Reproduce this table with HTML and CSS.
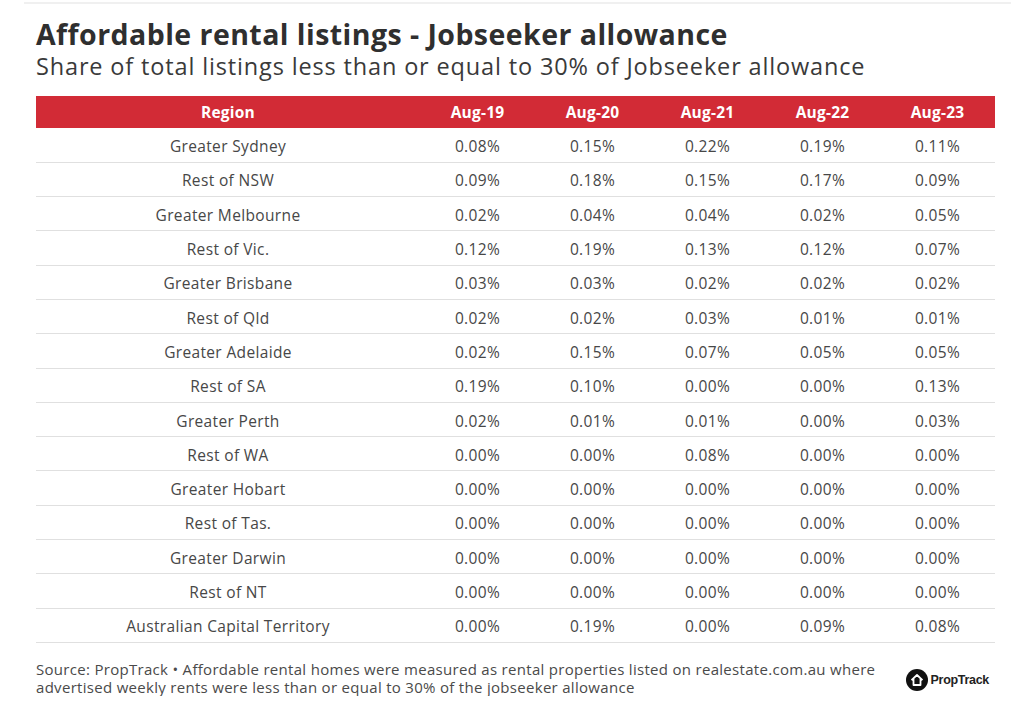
FILE: index.html
```html
<!DOCTYPE html>
<html>
<head>
<meta charset="utf-8">
<link rel="stylesheet" href="styles.css">
</head>
<body>
<div class="topline"></div>
<div class="wrap">
  <h1 class="title">Affordable rental listings - Jobseeker allowance</h1>
  <p class="subtitle">Share of total listings less than or equal to 30% of Jobseeker allowance</p>
  <table class="tbl">
    <thead>
      <tr><th class="reg">Region</th><th>Aug-19</th><th>Aug-20</th><th>Aug-21</th><th>Aug-22</th><th>Aug-23</th></tr>
    </thead>
    <tbody>
      <tr><td>Greater Sydney</td><td>0.08%</td><td>0.15%</td><td>0.22%</td><td>0.19%</td><td>0.11%</td></tr>
      <tr><td>Rest of NSW</td><td>0.09%</td><td>0.18%</td><td>0.15%</td><td>0.17%</td><td>0.09%</td></tr>
      <tr><td>Greater Melbourne</td><td>0.02%</td><td>0.04%</td><td>0.04%</td><td>0.02%</td><td>0.05%</td></tr>
      <tr><td>Rest of Vic.</td><td>0.12%</td><td>0.19%</td><td>0.13%</td><td>0.12%</td><td>0.07%</td></tr>
      <tr><td>Greater Brisbane</td><td>0.03%</td><td>0.03%</td><td>0.02%</td><td>0.02%</td><td>0.02%</td></tr>
      <tr><td>Rest of Qld</td><td>0.02%</td><td>0.02%</td><td>0.03%</td><td>0.01%</td><td>0.01%</td></tr>
      <tr><td>Greater Adelaide</td><td>0.02%</td><td>0.15%</td><td>0.07%</td><td>0.05%</td><td>0.05%</td></tr>
      <tr><td>Rest of SA</td><td>0.19%</td><td>0.10%</td><td>0.00%</td><td>0.00%</td><td>0.13%</td></tr>
      <tr><td>Greater Perth</td><td>0.02%</td><td>0.01%</td><td>0.01%</td><td>0.00%</td><td>0.03%</td></tr>
      <tr><td>Rest of WA</td><td>0.00%</td><td>0.00%</td><td>0.08%</td><td>0.00%</td><td>0.00%</td></tr>
      <tr><td>Greater Hobart</td><td>0.00%</td><td>0.00%</td><td>0.00%</td><td>0.00%</td><td>0.00%</td></tr>
      <tr><td>Rest of Tas.</td><td>0.00%</td><td>0.00%</td><td>0.00%</td><td>0.00%</td><td>0.00%</td></tr>
      <tr><td>Greater Darwin</td><td>0.00%</td><td>0.00%</td><td>0.00%</td><td>0.00%</td><td>0.00%</td></tr>
      <tr><td>Rest of NT</td><td>0.00%</td><td>0.00%</td><td>0.00%</td><td>0.00%</td><td>0.00%</td></tr>
      <tr><td>Australian Capital Territory</td><td>0.00%</td><td>0.19%</td><td>0.00%</td><td>0.09%</td><td>0.08%</td></tr>
    </tbody>
  </table>
  <div class="footer">
    <p class="source">Source: PropTrack • Affordable rental homes were measured as rental properties listed on realestate.com.au where advertised weekly rents were less than or equal to 30% of the jobseeker allowance</p>
    <div class="logo">
      <svg width="22" height="22" viewBox="0 0 22 22"><circle cx="11" cy="11" r="11" fill="#111"/><path d="M5.5 11.2 L11 6 L16.5 11.2 M7.5 9.6 V16 H14.5 V9.6" fill="none" stroke="#fff" stroke-width="1.8" stroke-linejoin="round"/></svg>
      <span>PropTrack</span>
    </div>
  </div>
</div>
</body>
</html>
```
FILE: styles.css
```css
html, body { margin: 0; padding: 0; background: #fff; }
body { font-family: "Open Sans", "Liberation Sans", sans-serif; color: #3d3d3d; }
.topline { height: 2px; margin: 2px 0 0 24px; background: #f0f0f0; }
.wrap { padding: 13px 16px 0 36px; }
.title { margin: 0; font-size: 28.5px; line-height: 34px; font-weight: 700; color: #2f2f2f; letter-spacing: 0.45px; }
.subtitle { margin: 0; font-size: 23.5px; line-height: 30px; font-weight: 400; color: #3a3a3a; letter-spacing: 0.85px; }
.tbl { margin-top: 15px; width: 959px; border-collapse: collapse; table-layout: fixed; }
.tbl th { background: #d22b36; color: #fff; font-weight: 700; font-size: 15.5px; height: 32px; padding: 0; text-align: center; width: 115px; letter-spacing: 0.2px; }
.tbl th.reg { width: 384px; }
.tbl td { text-align: center; font-size: 15.5px; height: 33.3px; padding: 2px 0 0; box-sizing: border-box; color: #474747; border-bottom: 1px solid #e0e0e0; letter-spacing: 0.35px; }
.tbl tbody tr { height: 34.3px; }
.footer { display: flex; align-items: center; justify-content: space-between; margin-top: 17px; }
.source { margin: 0; width: 860px; font-size: 15px; line-height: 18px; color: #4a4a4a; letter-spacing: 0.3px; }
.logo { display: flex; align-items: center; gap: 3px; margin-right: 6px; margin-top: 4px; }
.logo span { font-family: "Liberation Sans", sans-serif; font-weight: 700; font-size: 12.5px; color: #222; letter-spacing: -0.3px; }
```
